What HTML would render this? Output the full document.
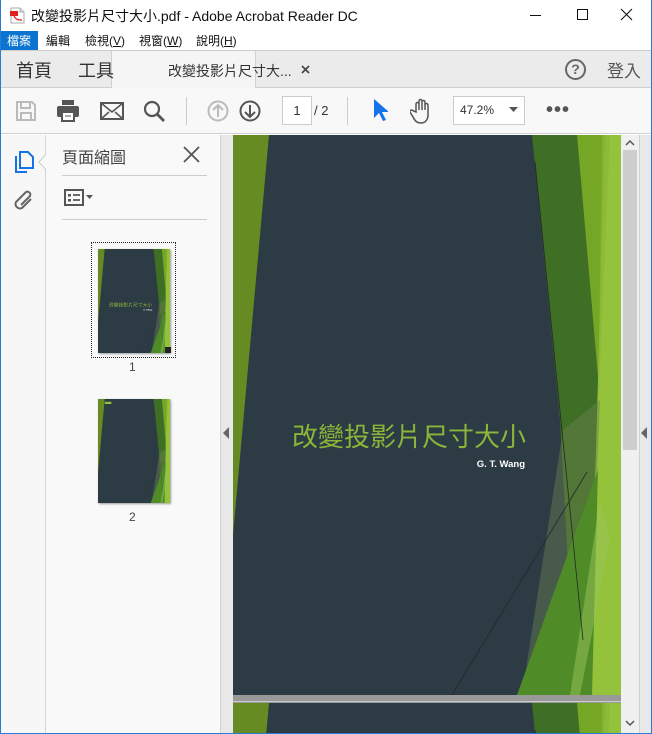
<!DOCTYPE html>
<html><head><meta charset="utf-8"><style>
*{margin:0;padding:0;box-sizing:border-box}
html,body{width:652px;height:734px;overflow:hidden}
body{background:#fff;font-family:"Liberation Sans","Noto Sans CJK TC",sans-serif;position:relative;color:#222}
.a{position:absolute}
</style></head><body>
<div class="a" style="left:0;top:0;width:1px;height:734px;background:#2b7bd6;z-index:5"></div>
<div class="a" style="right:0;top:0;width:1px;height:734px;background:#2b7bd6;z-index:5"></div>
<div class="a" style="left:0;top:733px;width:652px;height:1px;background:#2b7bd6;z-index:5"></div>
<svg class="a" style="left:9px;top:7px" width="16" height="17" viewBox="0 0 16 17"><path d="M2 1h9l4 4v11H2z" fill="#fff" stroke="#aaa"/><path d="M11 1v4h4" fill="#ddd" stroke="#aaa"/><path d="M1 4h8v5H1z" fill="#e0201c"/><path d="M5 9c2 4 5 4 8 4" stroke="#e0201c" stroke-width="1.3" fill="none"/></svg>
<div class="a" style="left:31px;top:6px;font-size:14px;color:#111">改變投影片尺寸大小.pdf - Adobe Acrobat Reader DC</div>
<div class="a" style="left:530px;top:15px;width:11px;height:1px;background:#111"></div>
<div class="a" style="left:577px;top:9px;width:11px;height:11px;border:1px solid #111"></div>
<svg class="a" style="left:620px;top:8px" width="13" height="13"><path d="M1 1L12 12M12 1L1 12" stroke="#111" stroke-width="1.1"/></svg>
<div class="a" style="left:1px;top:31px;width:37px;height:19px;background:#0a74d0"></div>
<div class="a" style="left:7px;top:32px;font-size:12px;color:#fff">檔案</div>
<div class="a" style="left:46px;top:32px;font-size:12px;color:#111">編輯</div>
<div class="a" style="left:85px;top:32px;font-size:12px;color:#111">檢視(<u>V</u>)</div>
<div class="a" style="left:139px;top:32px;font-size:12px;color:#111">視窗(<u>W</u>)</div>
<div class="a" style="left:196px;top:32px;font-size:12px;color:#111">說明(<u>H</u>)</div>
<div class="a" style="left:0;top:50px;width:652px;height:1px;background:#ccc"></div>
<div class="a" style="left:1px;top:51px;width:650px;height:37px;background:#ebebeb;border-bottom:1px solid #d0d0d0"></div>
<div class="a" style="left:111px;top:51px;width:145px;height:37px;background:#f5f5f5;border-left:1px solid #d0d0d0;border-right:1px solid #d0d0d0"></div>
<div class="a" style="left:16px;top:57px;font-size:18px;color:#333">首頁</div>
<div class="a" style="left:78px;top:57px;font-size:18px;color:#333">工具</div>
<div class="a" style="left:168px;top:61px;font-size:14px;color:#333">改變投影片尺寸大...</div>
<svg class="a" style="left:301px;top:65px" width="9" height="9"><path d="M1 1L8 8M8 1L1 8" stroke="#444" stroke-width="1.6"/></svg>
<div class="a" style="left:565px;top:59px;width:21px;height:21px;border:2px solid #666;border-radius:50%;font-size:14px;font-weight:bold;color:#666;text-align:center;line-height:17px">?</div>
<div class="a" style="left:607px;top:57px;font-size:17px;color:#555">登入</div>
<div class="a" style="left:1px;top:88px;width:650px;height:46px;background:#f8f8f8;border-bottom:1px solid #d0d0d0"></div>
<svg class="a" style="left:15px;top:100px" width="22" height="22" viewBox="0 0 22 22"><path d="M2 2h15l3 3v15H2z" fill="none" stroke="#bbb" stroke-width="2"/><path d="M6 2v6h9V2M6 20v-7h10v7" fill="none" stroke="#bbb" stroke-width="2"/></svg>
<svg class="a" style="left:56px;top:99px" width="24" height="24" viewBox="0 0 24 24"><rect x="6" y="1" width="12" height="5" fill="#555"/><rect x="1" y="7" width="22" height="11" rx="2" fill="#555"/><rect x="6" y="13" width="12" height="9" fill="#fff" stroke="#555" stroke-width="2"/><path d="M9 17h6" stroke="#555"/></svg>
<svg class="a" style="left:100px;top:102px" width="24" height="18"><rect x="1" y="1" width="22" height="16" fill="none" stroke="#555" stroke-width="2"/><path d="M1 1l11 9 11-9M1 17l8-7M23 17l-8-7" fill="none" stroke="#555" stroke-width="1.6"/></svg>
<svg class="a" style="left:143px;top:100px" width="24" height="24"><circle cx="9" cy="9" r="7" fill="none" stroke="#555" stroke-width="2.2"/><path d="M14 14l7 7" stroke="#555" stroke-width="2.8"/></svg>
<div class="a" style="left:186px;top:97px;width:1px;height:28px;background:#ccc"></div>
<svg class="a" style="left:207px;top:100px" width="22" height="22"><circle cx="11" cy="11" r="9.5" fill="none" stroke="#bbb" stroke-width="2"/><path d="M11 17V6M6 10l5-5 5 5" fill="none" stroke="#bbb" stroke-width="2"/></svg>
<svg class="a" style="left:239px;top:100px" width="22" height="22"><circle cx="11" cy="11" r="9.5" fill="none" stroke="#555" stroke-width="2"/><path d="M11 5v11M6 12l5 5 5-5" fill="none" stroke="#555" stroke-width="2"/></svg>
<div class="a" style="left:282px;top:96px;width:30px;height:29px;background:#fff;border:1px solid #ccc;font-size:13px;text-align:center;line-height:27px;color:#333">1</div>
<div class="a" style="left:314px;top:103px;font-size:13px;color:#333">/ 2</div>
<div class="a" style="left:347px;top:97px;width:1px;height:28px;background:#ccc"></div>
<svg class="a" style="left:372px;top:98px" width="16" height="24"><path d="M2 1v19l5-5 4 8 3-1-4-8h7z" fill="#1473e6"/></svg>
<svg class="a" style="left:410px;top:98px" width="24" height="26" viewBox="0 0 24 26"><path d="M6 14V6a1.5 1.5 0 013 0v6V3a1.5 1.5 0 013 0v9V4a1.5 1.5 0 013 0v8V7a1.5 1.5 0 013 0v10c0 5-3 8-7 8s-6-2-8-6l-3-5a1.5 1.5 0 012.5-1.5z" fill="none" stroke="#555" stroke-width="1.5"/></svg>
<div class="a" style="left:453px;top:96px;width:72px;height:29px;background:#fff;border:1px solid #ccc;font-size:12px;line-height:27px;padding-left:6px;color:#333">47.2%</div>
<svg class="a" style="left:509px;top:107px" width="9" height="6"><path d="M0 0h9L4.5 5z" fill="#555"/></svg>
<div class="a" style="left:546px;top:105px;font-size:20px;letter-spacing:1px;color:#555;line-height:10px;font-weight:bold">•••</div>
<div class="a" style="left:1px;top:135px;width:45px;height:598px;background:#f7f7f7;border-right:1px solid #d6d6d6"></div>
<svg class="a" style="left:13px;top:150px" width="22" height="24" viewBox="0 0 22 24"><path d="M7 2h8l5 5v11H7z" fill="none" stroke="#1473e6" stroke-width="2"/><path d="M3 6v16h11" fill="none" stroke="#1473e6" stroke-width="2"/></svg>
<svg class="a" style="left:12px;top:188px" width="22" height="24" viewBox="0 0 22 24"><path d="M9 17L18 8a3 3 0 00-4-4L4 14a4.5 4.5 0 006 6l9-9" fill="none" stroke="#666" stroke-width="2"/></svg>
<svg class="a" style="left:38px;top:153px" width="9" height="18"><path d="M9 0L1 9l8 9" fill="#f9f9f9" stroke="#ccc"/></svg>
<div class="a" style="left:46px;top:135px;width:174px;height:598px;background:#f9f9f9"></div>
<div class="a" style="left:62px;top:144px;font-size:16px;color:#444">頁面縮圖</div>
<svg class="a" style="left:183px;top:146px" width="17" height="17"><path d="M1 1l15 15M16 1L1 16" stroke="#555" stroke-width="1.8"/></svg>
<div class="a" style="left:62px;top:175px;width:145px;height:1px;background:#ccc"></div>
<svg class="a" style="left:64px;top:189px" width="30" height="18"><rect x="1" y="1" width="18" height="15" fill="none" stroke="#555" stroke-width="2"/><rect x="4" y="5" width="3" height="2.5" fill="#555"/><rect x="4" y="10" width="3" height="2.5" fill="#555"/><path d="M9 6h7M9 11h7" stroke="#555" stroke-width="1.8"/><path d="M22 6h7l-3.5 4z" fill="#555"/></svg>
<div class="a" style="left:62px;top:219px;width:145px;height:1px;background:#ccc"></div>
<div class="a" style="left:91px;top:242px;width:85px;height:116px;border:1px dotted #222"></div>
<svg class="a" style="left:98px;top:249px;box-shadow:1px 1px 2px #999" width="72" height="104" viewBox="233 135 388 560" preserveAspectRatio="none"><use href="#pg"/></svg>
<div class="a" style="left:165px;top:347px;width:6px;height:6px;background:#222"></div>
<div class="a" style="left:129px;top:360px;font-size:12px;color:#444">1</div>
<svg class="a" style="left:98px;top:399px;box-shadow:1px 1px 2px #999" width="72" height="104" viewBox="233 135 388 560" preserveAspectRatio="none"><use href="#pgb"/><rect x="270" y="150" width="35" height="12" fill="#8cc63f"/></svg>
<div class="a" style="left:129px;top:510px;font-size:12px;color:#444">2</div>
<div class="a" style="left:220px;top:135px;width:1px;height:598px;background:#d0d0d0"></div>
<div class="a" style="left:221px;top:135px;width:12px;height:598px;background:#e8e8e8"></div>
<svg class="a" style="left:223px;top:427px" width="7" height="12"><path d="M6 0v12L0 6z" fill="#666"/></svg>
<div class="a" style="left:233px;top:135px;width:389px;height:598px;background:#999"></div>
<svg class="a" style="left:233px;top:135px" width="388" height="560" viewBox="233 135 388 560">
<defs>
<g id="pgb">
<rect x="233" y="135" width="388" height="560" fill="#2c3b44"/>
<path d="M233 135h36l-36 400z" fill="#668b22"/>
<path d="M532 135h45l23 265-4 130-11 165h-10l-15-275z" fill="#3f6f24"/>
<path d="M577 135h44v560h-41l20-295z" fill="#76a626"/>
<path d="M605 135h16v560h-33l8-245z" fill="#94c23a"/>
<path d="M602 135h8l-12 280z" fill="#8ab838" opacity=".7"/>
<path d="M563 430l37-30-8 200-40 95h-30z" fill="#6b8050" opacity=".45"/>
<path d="M598 470l-6 225h-75z" fill="#4f8c27"/>
<path d="M600 500l10 40-30 155h-10z" fill="#9cc45c" opacity=".5"/>
<path d="M535 162L583 640" stroke="#22282a" stroke-width=".8"/>
<path d="M587 472L452 695" stroke="#22282a" stroke-width=".8"/>
</g>
<g id="pg"><use href="#pgb"/>
<text x="292" y="446" font-size="26" fill="#8bb63a" font-family="Liberation Sans,Noto Sans CJK TC,sans-serif">改變投影片尺寸大小</text>
<text x="525" y="467" font-size="9.5" font-weight="bold" fill="#fff" text-anchor="end" font-family="Liberation Sans,sans-serif">G. T. Wang</text>
</g>
</defs>
<use href="#pg"/>
</svg>
<div class="a" style="left:233px;top:695px;width:389px;height:7px;background:#999;border-bottom:1px solid #ccc"></div>
<svg class="a" style="left:233px;top:703px" width="388" height="30" viewBox="233 135 388 30" preserveAspectRatio="none"><use href="#pgb"/></svg>
<div class="a" style="left:621px;top:135px;width:18px;height:598px;background:#f0f0f0"></div>
<div class="a" style="left:623px;top:150px;width:14px;height:300px;background:#cdcdcd"></div>
<svg class="a" style="left:625px;top:139px" width="10" height="7"><path d="M1 6l4-4 4 4" fill="none" stroke="#555" stroke-width="1.5"/></svg>
<svg class="a" style="left:625px;top:720px" width="10" height="7"><path d="M1 1l4 4 4-4" fill="none" stroke="#555" stroke-width="1.5"/></svg>
<div class="a" style="left:639px;top:135px;width:12px;height:598px;background:#e8e8e8;border-left:1px solid #d0d0d0"></div>
<svg class="a" style="left:641px;top:427px" width="7" height="12"><path d="M6 0v12L0 6z" fill="#666"/></svg>
</body></html>
